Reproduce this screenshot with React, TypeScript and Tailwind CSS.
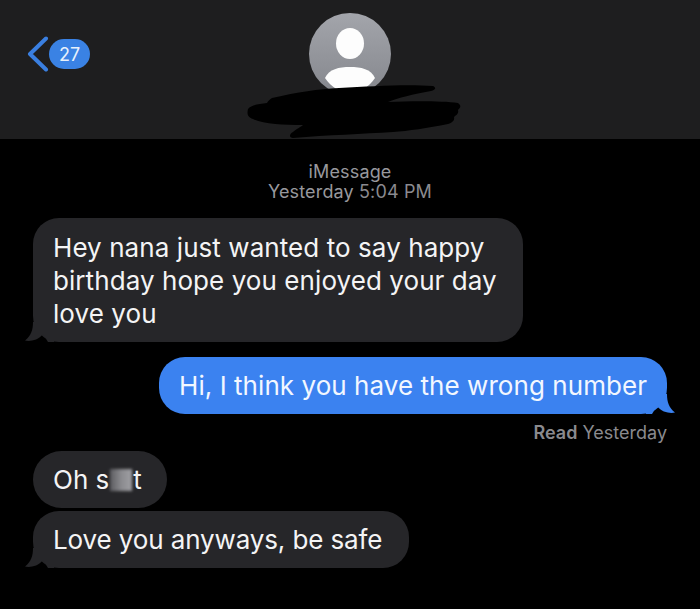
export default function App() {
  const tailL = (
    <svg className="absolute left-[-9px] bottom-0" width="30" height="20" viewBox="0 0 30 20">
      <path d="M9 0 C9 8 7 14 1 18.500 C5 19.500 14 19 19 12 L24 20 L30 20 L30 0 Z" fill="#262629" />
    </svg>
  );
  return (
    <div className="w-[700px] h-[609px] bg-black overflow-hidden font-['Inter',sans-serif] text-[#f4f4f5]">
      <header className="relative h-[139px] bg-[#1e1e1f] flex items-start">
        <div className="flex items-center pl-[26px] pt-[36px]">
          <svg width="24" height="36" viewBox="0 0 24 36" fill="none">
            <path d="M20 2.500 L4 18 L20 33.500" stroke="#3a7fe0" strokeWidth="4" strokeLinecap="round" strokeLinejoin="round" />
          </svg>
          <div className="ml-[-1px] w-[41px] h-[30px] rounded-full bg-[#3a82e4] flex items-center justify-center text-[18px] text-[#e8f1fc]">27</div>
        </div>
        <div className="absolute left-[309px] top-[13px] w-[82px] h-[82px] rounded-full bg-gradient-to-b from-[#a3a5ab] to-[#85878d] overflow-hidden">
          <svg width="82" height="82" viewBox="0 0 82 82">
            <ellipse cx="41" cy="30.500" rx="14" ry="15.500" fill="#fdfdfd" />
            <path d="M16 65 C20 56 30 54 41 54 C52 54 62 56 66 65 C60 74 50 80 41 80 C32 80 22 74 16 65 Z" fill="#fdfdfd" />
          </svg>
        </div>
        <svg className="absolute left-[243px] top-[83px]" width="220" height="56" viewBox="0 0 220 56">
          <path d="M29 15 C55 9 75 6 96 5 C130 3 165 1 190 3 C194 5 192 7 188 8 C170 11 155 15 145 19 C170 18 200 18 215 20 C219 23 217 25 215 27 C216 31 213 32 211 34 C212 38 208 40 205 41 C185 45 165 48 150 49 C120 51 85 52 50 55 C46 55 46 51 50 49 C53 46 58 44 60 42 C40 42 20 41 10 36 C4 34 4 30 5 26 C8 22 15 21 24 20 C25 18 27 16 29 15 Z" fill="#000" />
        </svg>
      </header>

      <div className="pt-[23px] text-center text-[18px] leading-[20px] tracking-[0.15px] text-[#98989d]">
        <p>iMessage</p>
        <p>Yesterday <span className="text-[#8a8a8f]">5:04 PM</span></p>
      </div>

      <div className="pt-[16px] pl-[33px] pr-[33px] flex flex-col">
        <div className="relative self-start w-[490px] h-[124px] bg-[#262629] rounded-[26px] px-[20px] pt-[13px] text-[26px] leading-[33px] tracking-[0.07px]">
          {tailL}
          <p className="relative">Hey nana just wanted to say happy birthday hope you enjoyed your day love you</p>
        </div>

        <div className="relative self-end mt-[15px] h-[57px] bg-[#3b82f0] rounded-[26px] px-[20px] flex items-center text-[26px] tracking-[0.055px] whitespace-nowrap text-[#f2f7ff]">
          <svg className="absolute right-[-9px] bottom-0" width="30" height="20" viewBox="0 0 30 20">
            <path d="M21 0 C21 8 23 14 29 18.500 C25 19.500 16 19 11 12 L6 20 L0 20 L0 0 Z" fill="#3b82f0" />
          </svg>
          <span className="relative">Hi, I think you have the wrong number</span>
        </div>

        <p className="self-end mt-[9px] text-[18px] leading-[20px] text-[#8a8a8e]"><span className="font-semibold">Read</span> Yesterday</p>

        <div className="self-start mt-[8px] w-[134px] h-[57px] bg-[#262629] rounded-full pl-[20px] flex items-center text-[26px] whitespace-nowrap">
          Oh s<span className="inline-block w-[22px] h-[22px] ml-[1px] mr-[1px] bg-gradient-to-r from-[#5c5c60] via-[#8a8a8e] to-[#a0a0a4] blur-[1.500px]"></span>t
        </div>

        <div className="relative self-start mt-[3px] w-[376px] h-[57px] bg-[#262629] rounded-[26px] pl-[20px] flex items-center text-[26px] tracking-[-0.12px] whitespace-nowrap">
          {tailL}
          <span className="relative">Love you anyways, be safe</span>
        </div>
      </div>
    </div>
  );
}
